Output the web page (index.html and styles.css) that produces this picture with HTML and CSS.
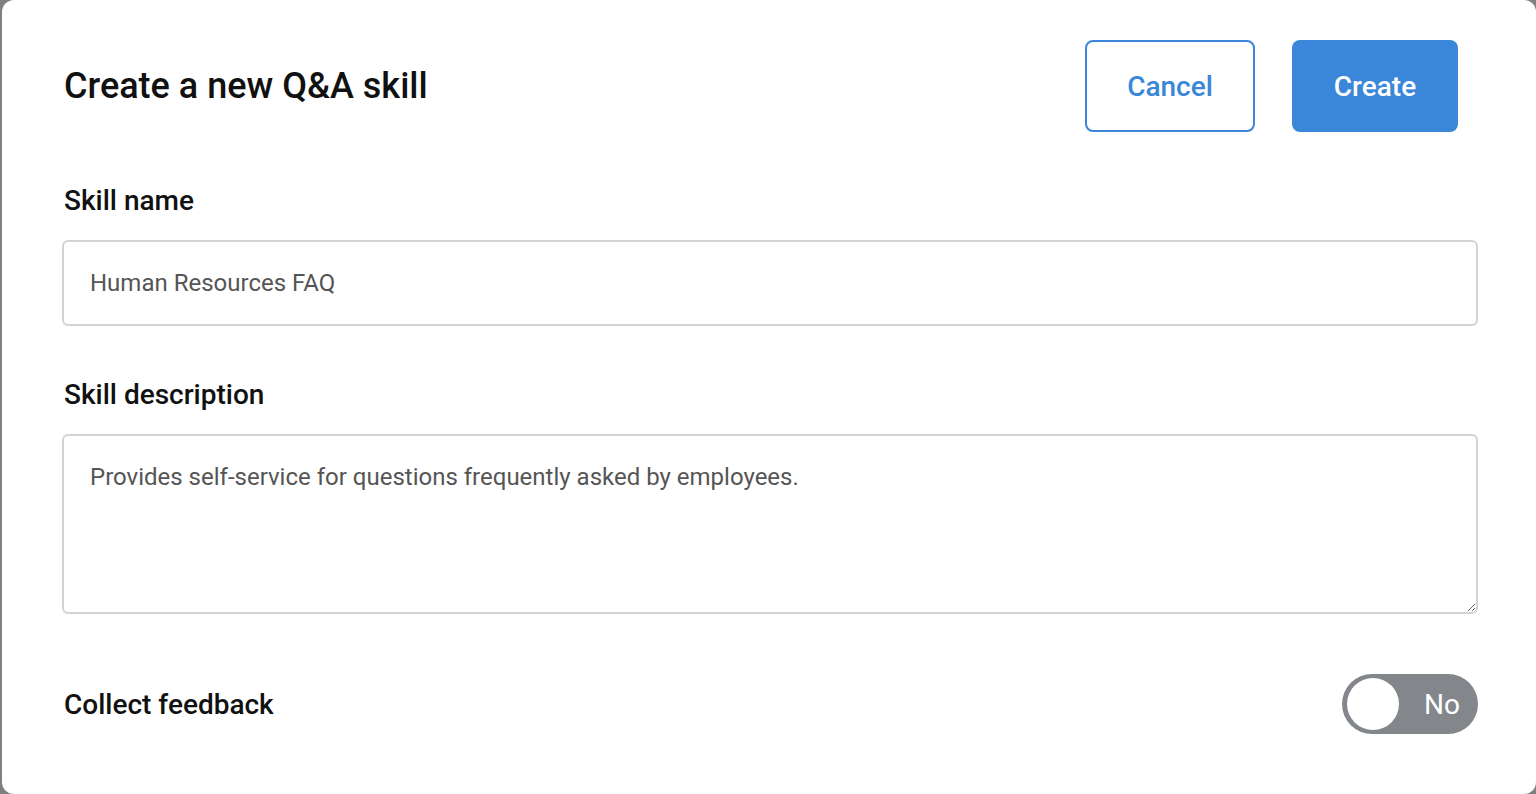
FILE: index.html
```html
<!DOCTYPE html>
<html lang="en">
<head>
<meta charset="utf-8">
<title>Create a new Q&amp;A skill</title>
<link rel="stylesheet" href="styles.css">
</head>
<body>
<div class="modal">
  <div class="header">
    <h1 class="title">Create a new Q&amp;A skill</h1>
    <div class="actions">
      <button class="btn btn-outline">Cancel</button>
      <button class="btn btn-primary">Create</button>
    </div>
  </div>
  <label class="label label-first" for="name">Skill name</label>
  <input id="name" class="field" type="text" value="Human Resources FAQ">
  <label class="label" for="desc">Skill description</label>
  <textarea id="desc" class="field area">Provides self-service for questions frequently asked by employees.</textarea>
  <div class="feedback-row">
    <span class="label-inline">Collect feedback</span>
    <div class="toggle">
      <span class="knob"></span>
      <span class="toggle-text">No</span>
    </div>
  </div>
</div>
</body>
</html>
```
FILE: styles.css
```css
html, body {
  margin: 0;
  padding: 0;
  height: 100%;
  overflow: hidden;
}
body {
  background: #808080;
  font-family: Roboto, "Liberation Sans", sans-serif;
}
.modal {
  margin-left: 2px;
  height: 794px;
  box-sizing: border-box;
  background: #ffffff;
  border-radius: 12px;
  padding: 40px 58px 0 60px;
  display: flex;
  flex-direction: column;
}
.header {
  display: flex;
  align-items: center;
  justify-content: space-between;
  height: 92px;
  padding-right: 20px;
}
.title {
  margin: 0;
  font-size: 36px;
  font-weight: 500;
  color: #111;
  padding-left: 2px;
}
.actions {
  display: flex;
  gap: 37px;
}
.btn {
  height: 92px;
  border-radius: 8px;
  font-family: Roboto, "Liberation Sans", sans-serif;
  font-size: 28px;
  font-weight: 500;
  box-sizing: border-box;
  cursor: pointer;
  padding: 0;
}
.btn-outline {
  width: 170px;
  background: #fff;
  color: #3a86d8;
  border: 2px solid #3a86d8;
}
.btn-primary {
  width: 166px;
  background: #3a86d8;
  color: #fff;
  border: none;
}
.label {
  display: block;
  font-size: 28px;
  font-weight: 500;
  line-height: 30px;
  color: #111;
  margin-top: 54px;
  margin-bottom: 24px;
  padding-left: 2px;
}
.field {
  display: block;
  width: 100%;
  box-sizing: border-box;
  height: 86px;
  border: 2px solid #d3d3d3;
  border-radius: 6px;
  padding: 0 26px;
  font-family: Roboto, "Liberation Sans", sans-serif;
  font-size: 24px;
  color: #555;
  background: #fff;
  outline: none;
}
.area {
  height: 180px;
  padding-top: 27px;
  line-height: 28px;
  resize: both;
}
.feedback-row {
  display: flex;
  align-items: center;
  justify-content: space-between;
  margin-top: 60px;
}
.label-inline {
  font-size: 28px;
  font-weight: 500;
  color: #111;
  padding-left: 2px;
}
.toggle {
  width: 136px;
  height: 60px;
  border-radius: 30px;
  background: #83878c;
  display: flex;
  align-items: center;
  box-sizing: border-box;
  padding: 0 4px 0 5px;
}
.knob {
  width: 52px;
  height: 52px;
  border-radius: 50%;
  background: #fff;
}
.toggle-text {
  color: #fff;
  font-size: 28px;
  margin-left: 25px;
}
```
